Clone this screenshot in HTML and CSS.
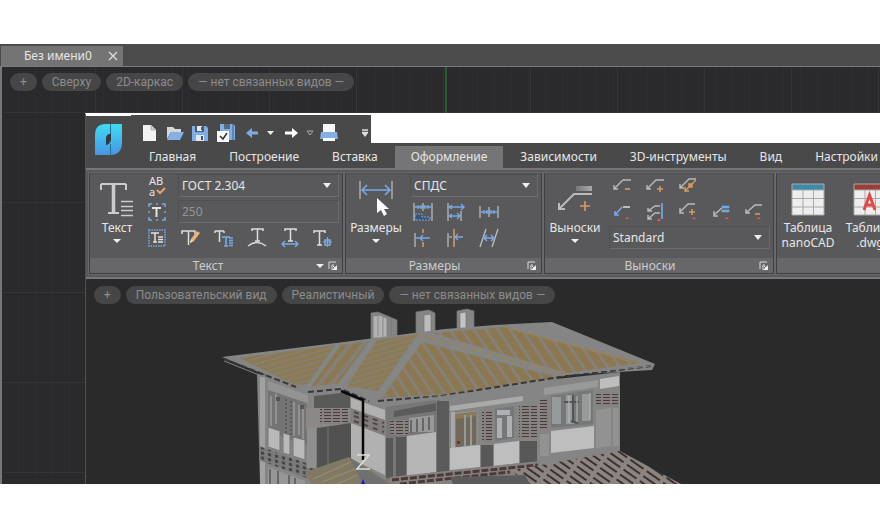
FILE: index.html
```html
<!DOCTYPE html>
<html lang="ru">
<head>
<meta charset="utf-8">
<title>Без имени0</title>
<link rel="stylesheet" href="styles.css">
</head>
<body>
<svg class="defs" aria-hidden="true">
  <defs>
    <linearGradient id="logo-fill" x1="0" y1="0" x2="0" y2="1"><stop offset="0" stop-color="#3fdcf2"/><stop offset="1" stop-color="#4796e6"/></linearGradient>
    <linearGradient id="bar-fill"><stop offset="0" stop-color="#777"/><stop offset="1" stop-color="#aaa"/></linearGradient>
    <pattern id="tiles-flat" width="20" height="5" patternUnits="userSpaceOnUse" patternTransform="rotate(-16)"><rect width="20" height="5" fill="#8a7a55"/><rect width="20" height="1" fill="#87827a"/></pattern>
    <pattern id="tiles-front" width="10" height="20" patternUnits="userSpaceOnUse" patternTransform="rotate(-34)"><rect width="10" height="20" fill="#85807a"/><rect width="7" height="20" fill="#8b7750"/></pattern>
    <pattern id="tiles-steep" width="10" height="20" patternUnits="userSpaceOnUse" patternTransform="rotate(38)"><rect width="10" height="20" fill="#858077"/><rect width="6" height="20" fill="#8b7750"/></pattern>
    <pattern id="slats" width="9" height="3" patternUnits="userSpaceOnUse"><rect width="9" height="3" fill="#858180"/><rect y="1" width="7" height="1" fill="#4b3b38"/></pattern>
    <pattern id="rail" width="7" height="5" patternUnits="userSpaceOnUse" patternTransform="skewY(13)"><rect width="7" height="5" fill="#7b7b7b"/><rect x="2" y="1" width="3" height="3" fill="#434040"/></pattern>
    <pattern id="porch" width="20" height="6" patternUnits="userSpaceOnUse" patternTransform="rotate(35)"><rect width="20" height="6" fill="#8b8582"/><rect width="16" height="2" y="2" fill="#3e302f"/></pattern>
  </defs>
  <symbol id="i-arrow" viewBox="0 0 8 6"><path d="M0 1h8L4 5z" fill="#eee"/></symbol>
  <symbol id="i-launch" viewBox="0 0 10 10"><path d="M1 8V1h7M4 9V4h2" fill="none" stroke="#ddd"/><path d="M5 5l3 3" stroke="#eee"/><path d="M9 4v5H4z" fill="#eee"/></symbol>
</svg>

<main class="app">
  <div class="doc-bar">
    <div class="doc-tab"><span>Без имени0</span><button class="close" aria-label="Закрыть"><svg viewBox="0 0 10 10"><path d="M1 1l8 8M9 1L1 9" stroke="#ddd" stroke-width="1.3"/></svg></button></div>
  </div>
  <div class="canvas">
    <div class="pills">
      <button class="pill">+</button><button class="pill">Сверху</button><button class="pill">2D-каркас</button><button class="pill">— нет связанных видов —</button>
    </div>
    <section class="window">
      <header class="head">
        <div class="logo"><svg viewBox="0 0 28 32"><path d="M0 31V11Q0 0 11 0h4v10q-4 0-4 5v6q4-1 5-6V0h11v18q0 13-12 13z" fill="url(#logo-fill)"/><path d="M15.500 0v10M15.500 20v11" stroke="#28708e"/><path d="M11 21v-6q0-4 4-5h1v6q-1 4-5 5z" fill="#333b42"/></svg></div>
        <div class="head-rows">
          <div class="quick-row">
            <div class="quick">
              <button aria-label="Создать"><svg viewBox="0 0 20 20"><path d="M4 2h8l5 5v11H4z" fill="#f2f2f2"/><path d="M12 2v5h5" fill="#ccc" stroke="#999" stroke-width=".6"/></svg></button>
              <button aria-label="Открыть"><svg viewBox="0 0 20 20"><path d="M2 4h6l2 2h6v3H6l-4 7z" fill="#d7d7d7"/><path d="M6 9h13l-4 8H2z" fill="#83b1e6"/></svg></button>
              <button aria-label="Сохранить"><svg viewBox="0 0 20 20"><path d="M2 3h14l2 2v13H2z" fill="#7eaee6"/><path d="M5 3h9v6H5z" fill="#4b5b6e"/><path d="M7 3h5v5H7zM6 12h8v6H6z" fill="#e5e9ee"/><path d="M11 13h2v4h-2zM11 4h1v3h-1z" fill="#456"/></svg></button>
              <button aria-label="Сохранить все"><svg viewBox="0 0 20 20"><path d="M4 1h13l2 2v14H4z" fill="#7eaee6"/><path d="M8 1h6v5H8z" fill="#596a7e"/><path d="M17 1v16" stroke="#4b5b6e"/><path d="M1 8h12v11H1z" fill="#fafafa"/><path d="M4 13l3 3 4-6" fill="none" stroke="#333" stroke-width="1.500"/></svg></button>
              <button aria-label="Отменить"><svg viewBox="0 0 20 20"><path d="M4 10l6-5v3.500h6v3h-6V15z" fill="#79abe5"/></svg></button>
              <button class="thin" aria-label="Список отмены"><svg viewBox="0 0 8 6"><path d="M0 1h7L3.500 5z" fill="#eee"/></svg></button>
              <button aria-label="Вернуть"><svg viewBox="0 0 20 20"><path d="M17 10l-6-5v3.500H4v3h7V15z" fill="#fff"/></svg></button>
              <button class="thin" aria-label="Список возврата"><svg viewBox="0 0 8 6"><path d="M1 1h6L4 5z" fill="none" stroke="#aaa"/></svg></button>
              <button class="print" aria-label="Печать"><svg viewBox="0 0 20 20"><path d="M4 1h12v8H4z" fill="#f7f7f7"/><path d="M2 9h16l1 7H1z" fill="#83b1e6"/><path d="M4 15h12v3H4z" fill="#fafafa"/></svg></button>
              <button class="thin" aria-label="Настроить панель"><svg viewBox="0 0 8 8"><path d="M1 1h6M1 3.500h6" stroke="#ddd" stroke-width="1.300"/><path d="M1 4h6L4 8z" fill="#ddd"/></svg></button>
            </div>
          </div>
          <nav class="tabs">
            <a href="#">Главная</a><a href="#">Построение</a><a href="#">Вставка</a><a href="#" class="active">Оформление</a><a href="#">Зависимости</a><a href="#">3D-инструменты</a><a href="#">Вид</a><a href="#">Настройки</a>
          </nav>
        </div>
      </header>

      <div class="ribbon">
        <section class="panel">
          <div class="body">
            <button class="big text"><svg class="pic" viewBox="0 0 36 36"><path d="M2 3h25M2 9V3M27 9V3M9 32h11" fill="none" stroke="#ccc" stroke-width="2"/><path d="M14.500 3v29" stroke="#ccc" stroke-width="3.500"/><path d="M22 20.500h12M22 25.500h12M22 29.500h12M22 34.500h12" stroke="#ccc" stroke-width="1.500"/></svg><span>Текст</span><svg class="arr"><use href="#i-arrow"/></svg></button>
            <div class="side">
              <button class="spell" aria-label="Орфография"><span>AB</span><span>a</span><svg class="tick" viewBox="0 0 10 8"><path d="M1 3l3 3 5-5" fill="none" stroke="#e6a267" stroke-width="2"/></svg></button>
              <button aria-label="Рамка текста"><svg viewBox="0 0 20 20"><path d="M2 5V2h3M15 2h3v3M18 15v3h-3M5 18H2v-3M2 9v2M18 9v2M9 2h2M9 18h2" fill="none" stroke="#78a7e2" stroke-width="1.500"/><path d="M5 6h9M9.500 6v9" stroke="#e2e2e2" stroke-width="2"/></svg></button>
              <button aria-label="Выделить текст"><svg viewBox="0 0 20 20"><path d="M2 2h16v16H2z" fill="none" stroke="#78a7e2" stroke-width="1.500" stroke-dasharray="1.500 1"/><path d="M4 5h8M8 5v9M6 14h4M11 9h5M11 11.500h5M11 14h5" stroke="#e2e2e2" stroke-width="1.500"/></svg></button>
            </div>
            <div class="col">
              <label class="field"><select aria-label="Стиль текста"><option>ГОСТ 2.304</option></select></label>
              <div class="field dim"><input aria-label="Высота текста" value="250"></div>
              <div class="icons">
                <button aria-label="Редактировать"><svg viewBox="0 0 20 20"><path d="M1 6V3h13v3M7.500 3v14" fill="none" stroke="#ddd" stroke-width="1.500"/><path d="M9 15l1-4 6-8 3 2-6 8z" fill="#e9b477"/><path d="M9 15l1-3 2 1z" fill="#eee"/></svg></button>
                <button aria-label="Масштаб текста"><svg viewBox="0 0 20 20"><path d="M1 3h9M5.500 3v11M1 3v2M10 3v2" stroke="#ddd" stroke-width="1.500"/><path d="M8 9h8M12 9v9M10 18h4M15 10h4M15 12.500h4M15 15h4M15 17.500h4" stroke="#78aae6" stroke-width="1.600"/></svg></button>
                <button aria-label="Текст по дуге"><svg viewBox="0 0 20 20"><path d="M5 3V1h11v2M10.500 1v12M8 13h5" fill="none" stroke="#ddd" stroke-width="1.500"/><path d="M1 18q9-7 18 0" fill="none" stroke="#ddd" stroke-width="1.300"/></svg></button>
                <button aria-label="Вписать текст"><svg viewBox="0 0 20 20"><path d="M5 3V1h11v2M10.500 1v12M8 13h5" fill="none" stroke="#ddd" stroke-width="1.500"/><path d="M2 16h16M5 13l-3 3 3 3M15 13l3 3-3 3" fill="none" stroke="#78aae6" stroke-width="1.400"/></svg></button>
                <button aria-label="Выравнивание"><svg viewBox="0 0 20 20"><path d="M1 5V3h11v2M6.500 3v14M4 17h5" fill="none" stroke="#ddd" stroke-width="1.500"/><path d="M14.500 9v10M10 14h9" stroke="#78aae6" stroke-width="1.200"/><path d="M12 12h5v5h-5z" fill="none" stroke="#78aae6" stroke-width="1.500"/></svg></button>
              </div>
            </div>
          </div>
          <div class="title menu"><span>Текст</span><svg class="arr"><use href="#i-arrow"/></svg><button aria-label="Параметры текста"><svg><use href="#i-launch"/></svg></button></div>
        </section>

        <section class="panel">
          <div class="body">
            <button class="big"><svg class="pic" viewBox="0 0 36 36"><path d="M2 0v18M34 0v18" stroke="#aaa" stroke-width="1.500"/><path d="M4 9h28M9 4L4 9l5 5M27 4l5 5-5 5" fill="none" stroke="#75a9e6" stroke-width="1.600"/><path d="M19 17v15l4-3 3 6 3-2-3-5h5z" fill="#fff"/></svg><span>Размеры</span><svg class="arr"><use href="#i-arrow"/></svg></button>
            <div class="col">
              <label class="field"><select aria-label="Стиль размеров"><option>СПДС</option></select></label>
              <div class="icons three">
                <button aria-label="Авторазмер"><svg viewBox="0 0 20 20"><path d="M1 1v18M19 1v18M10 1v8" stroke="#b9b9b9" stroke-width="1.300"/><path d="M2 5h16M5 3v4M15 3v4M8 3v4M12 3v4" stroke="#75a9e6" stroke-width="1.400"/><path d="M2 12h7v3h8v3H2z" fill="#3a5472" stroke="#75a9e6" stroke-dasharray="2 1"/></svg></button>
                <button aria-label="Базовый размер"><svg viewBox="0 0 20 20"><path d="M2 1v18M15 9v10" stroke="#b9b9b9" stroke-width="1.300"/><path d="M3 5h15M6 3L3 5l3 2M15 2l3 3-3 3M3 14h11M6 12l-3 2 3 2M11 11l3 3-3 3" fill="none" stroke="#75a9e6" stroke-width="1.400"/></svg></button>
                <button aria-label="Размерная цепь"><svg viewBox="0 0 20 20"><path d="M1 4v12M10 5v10M19 4v12" stroke="#b9b9b9" stroke-width="1.300"/><path d="M2 10h16M5 8v4M8 8v4M12 8v4M15 8v4" stroke="#75a9e6" stroke-width="1.300"/></svg></button>
                <button aria-label="Разрыв размера"><svg viewBox="0 0 20 20"><path d="M2 5v14" stroke="#b9b9b9" stroke-width="1.300"/><path d="M3 10h14M10 7l-3 3 3 3" fill="none" stroke="#75a9e6" stroke-width="1.400"/><path d="M10 1v4M10 14v5" stroke="#d99b60" stroke-width="1.500"/></svg></button>
                <button aria-label="Линия размера"><svg viewBox="0 0 20 20"><path d="M2 5v14" stroke="#b9b9b9" stroke-width="1.300"/><path d="M3 9h3M9 9h8M12 6L9 9l3 3" fill="none" stroke="#75a9e6" stroke-width="1.400"/><path d="M8 1v18" stroke="#d99b60" stroke-width="1.500"/></svg></button>
                <button aria-label="Наклонить размер"><svg viewBox="0 0 20 20"><path d="M7 1L1 19M19 1l-6 18" stroke="#b9b9b9" stroke-width="1.400"/><path d="M5 10h10M8 7l-3 3 3 3M12 7l3 3-3 3" fill="none" stroke="#75a9e6" stroke-width="1.500"/></svg></button>
              </div>
            </div>
          </div>
          <div class="title"><span>Размеры</span><button aria-label="Параметры размеров"><svg><use href="#i-launch"/></svg></button></div>
        </section>

        <section class="panel">
          <div class="body">
            <button class="big"><svg class="pic" viewBox="0 0 36 36"><path d="M19 5h16v5H19z" fill="url(#bar-fill)"/><path d="M35 13H17L2 28M2 22v6h6" fill="none" stroke="#bbb" stroke-width="2"/><path d="M28 20v10M23 25h10" stroke="#d99b60" stroke-width="1.600"/></svg><span>Выноски</span><svg class="arr"><use href="#i-arrow"/></svg></button>
            <div class="col">
              <div class="icons">
                <button aria-label="Убрать линию"><svg viewBox="0 0 20 20"><path d="M19 4h-8l-9 9M2 9v4h4" fill="none" stroke="#b9b9b9" stroke-width="1.400"/><path d="M13 13h5" stroke="#d99b60" stroke-width="1.600"/></svg></button>
                <button aria-label="Добавить линию"><svg viewBox="0 0 20 20"><path d="M19 4h-8l-9 9M2 9v4h4" fill="none" stroke="#b9b9b9" stroke-width="1.400"/><path d="M12 13h6M15 10v6" stroke="#d99b60" stroke-width="1.500"/></svg></button>
                <button aria-label="Изменить линию"><svg viewBox="0 0 20 20"><path d="M18 3h-7l-9 9M2 8v4h4" fill="none" stroke="#b9b9b9" stroke-width="1.400"/><path d="M18 4L7 15M7 11v4h4M11 8h3v3h-3z" fill="none" stroke="#d99b60" stroke-width="1.400"/></svg></button>
              </div>
              <div class="icons">
                <button aria-label="Стиль выноски"><svg viewBox="0 0 20 20"><path d="M11 5h7" stroke="#bbb" stroke-width="2"/><path d="M10 5l-7 8M3 9v4h4" fill="none" stroke="#75a9e6" stroke-width="1.500"/><path d="M13 17l2-2 2 2z" fill="#e05a59"/></svg></button>
                <button aria-label="Выровнять выноски"><svg viewBox="0 0 20 20"><path d="M17 1v16" stroke="#75a9e6" stroke-width="1.700"/><path d="M15 4h-5l-7 5M3 6v3h4M15 11h-5l-7 6M3 13v4h4" fill="none" stroke="#bbb" stroke-width="1.400"/><path d="M12 19l2-3 2 3z" fill="#e05a59"/></svg></button>
                <button aria-label="Добавить выноску"><svg viewBox="0 0 20 20"><path d="M17 2h-7l-8 8M2 6v5h4" fill="none" stroke="#bbb" stroke-width="1.400"/><path d="M11 10h6M14 7v6" stroke="#d99b60" stroke-width="1.500"/><path d="M14 17l2-2 2 2z" fill="#e05a59"/></svg></button>
                <button aria-label="Собрать выноски"><svg viewBox="0 0 20 20"><path d="M11 6L3 13M3 9v5h4" fill="none" stroke="#bbb" stroke-width="1.400"/><path d="M11 4h7v2h-7zM11 8h7v2h-7z" fill="#75a9e6" stroke="#75a9e6" stroke-width=".6"/><path d="M14 17l2-2 2 2z" fill="#e05a59"/></svg></button>
                <button aria-label="Удалить выноску"><svg viewBox="0 0 20 20"><path d="M18 3h-7l-9 8M2 7v4h4" fill="none" stroke="#bbb" stroke-width="1.400"/><path d="M11 12h5" stroke="#d99b60" stroke-width="1.500"/><path d="M13 17l2-2 2 2z" fill="#e05a59"/></svg></button>
              </div>
              <label class="field"><select aria-label="Стиль выносок"><option>Standard</option></select></label>
            </div>
          </div>
          <div class="title"><span>Выноски</span><button aria-label="Параметры выносок"><svg><use href="#i-launch"/></svg></button></div>
        </section>

        <section class="panel last">
          <div class="body">
            <button class="big wide"><svg class="pic" viewBox="0 0 36 36"><path d="M2 3h32v31H2z" fill="#eee"/><path d="M2 3h32v6H2z" fill="#3d8ba8"/><path d="M2 9h32M2 17.500h32M2 26h32M13 9v25M23.500 9v25M2 3h32v31H2z" fill="none" stroke="#a8a8a8"/></svg><span>Таблица nanoCAD</span></button>
            <button class="big wide"><svg class="pic" viewBox="0 0 36 36"><path d="M2 3h32v31H2z" fill="#eee"/><path d="M2 3h32v6H2z" fill="#9b3d38"/><path d="M2 9h32M2 17.500h32M2 26h32M13 9v25M23.500 9v25M2 3h32v31H2z" fill="none" stroke="#a8a8a8"/><path d="M12 29l5.500-15L23 29M14 24h7" fill="none" stroke="#e34848" stroke-width="3"/></svg><span>Таблица .dwg</span></button>
          </div>
          <div class="title"></div>
        </section>
      </div>

      <div class="view">
        <svg class="model" viewBox="86 279 794 205" role="img" aria-label="Модель дома">
          <g stroke="#777" stroke-width=".7">
            <path d="M371 313l7-1 19 8v20h-26z" fill="#858585"/><path d="M373 316l6-1 8 3v20h-14z" fill="#b2b2b2"/><path d="M378 314v22M383 316v22M391 318v20"/>
            <path d="M416 312l13-2 6 3v24h-19z" fill="#858585"/><path d="M424 315l7-1v20h-7z" fill="#bcbcbc"/>
            <path d="M457 311l10-2 7 2v20h-17z" fill="#858585"/><path d="M460 313l6-1v17h-6z" fill="#c4c4c4"/>
          </g>
          <path d="M257 374l100 14 190-8 73-8v86l60 26H260z" fill="#858585"/>
          <path d="M260 377h5v107h-5z" fill="#a1a1a1"/>
          <path d="M268 381l40 14v10l-40-14z" fill="#939393"/>
          <path d="M268 390l39 13v42l-39-13z" fill="#747474"/>
          <g stroke="#9b9b9b" stroke-width="1.500"><path d="M271 396v30M276 394v30M294 402v34M299 405v30M303 406v33"/></g>
          <path d="M286 399v35M291 401v34" stroke="#454545" stroke-dasharray="2 2"/>
          <path d="M276 397h4v4h-4zM300 405h4v4h-4z" fill="#555"/>
          <path d="M268 427l12 4v20l-12-4zM283 433l7 2v20l-7-2zM293 437l12 3v20l-12-4z" fill="#b9b9b9" stroke="#777"/>
          <path d="M259 446l58 21v15l-58-22z" fill="url(#rail)"/>
          <path d="M268 467l37 14v3h-37z" fill="#969696"/><path d="M270 469v15M278 471v13M289 475v9M295 478v6" stroke="#666" stroke-width="2"/>
          <path d="M314 396l36-4v20l-36 1z" fill="#595959"/>
          <path d="M306 408h44v16l-44 5z" fill="#8c8888"/>
          <path d="M320 409h28v15h-28z" fill="url(#slats)"/>
          <path d="M317 428l34-5v37l-34 8z" fill="#515151"/><path d="M328 427v38M316 430v37" stroke="#777"/>
          <path d="M307 428h9v40h-9z" fill="#8f8f8f"/>
          <path d="M351 398l34 12v65l-34-16z" fill="#b1b1b1"/>
          <path d="M351 408l34 12v16l-34-13z" fill="#807d7b"/><path d="M354 412l30 11M354 416l30 11M354 421l30 11" stroke="#4e4746" stroke-width="2" stroke-dasharray="5 5"/>
          <path d="M386 407l54-8v77l-54 5z" fill="#777"/><path d="M394 411l42-8v8l-42 6z" fill="#5b5b5b"/>
          <path d="M390 420h18v15h-18z" fill="url(#slats)"/><path d="M409 418l25-3v17h-25z" fill="#999"/><path d="M411 420v13M417 419v13M423 418v13M429 417v13" stroke="#666" stroke-width="2"/>
          <path d="M386 438h7v40h-7zM396 437h10v40h-10z" fill="#585858"/><path d="M407 436l29-4v40l-29 4z" fill="#b6b6b6"/>
          <path d="M437 401h12v73h-12z" fill="#5b5b5b"/>
          <path d="M450 404l88-10v70l-88 10z" fill="#858585"/><path d="M450 406l73-10v5l-73 10z" fill="#aaa"/>
          <path d="M451 412h4v50h-4z" fill="#a8a8a8"/>
          <path d="M455 414l22-3v34l-22 3z" fill="#71695c" stroke="#999"/><path d="M456 417l20-3" stroke="#8a7a58" stroke-width="4"/><path d="M465 415v31M471 415v31" stroke="#999" stroke-width="2"/>
          <path d="M457 441h3v3h-3z" fill="#812e24"/>
          <path d="M482 411h10v31h-10z" fill="url(#slats)"/><path d="M495 409l19-3v32l-19 3z" fill="#777"/><path d="M497 410h13v5h-13zM497 418h5v20h-5zM507 416h5v21h-5z" fill="#adb1b5"/>
          <path d="M519 406h18v33h-18z" fill="url(#slats)"/>
          <path d="M450 448l30-3v22l-30 3zM494 444l25-3v22l-25 3z" fill="#bebebe"/><path d="M481 445h12v22h-12zM520 441h17v22h-17z" fill="#585858"/>
          <path d="M539 385l81-12v78l-81 12z" fill="#858585"/><path d="M544 388l54-8v7l-54 8z" fill="#999"/>
          <path d="M540 398h9v31h-9z" fill="url(#slats)"/><path d="M551 396l42-6v34l-42 4z" fill="#777"/><path d="M552 397h9v27h-9zM566 395h8v29h-8zM582 394h8v27h-8z" fill="#969a9b"/><path d="M573 395v28M564 402h15M571 421l7 2" stroke="#505456" stroke-width="2"/><path d="M569 396v27M577 396v26M590 393v27" stroke="#bbb"/>
          <path d="M600 379l19-3v10l-19 3z" fill="#bebebe"/><path d="M596 392h22v14h-22z" fill="url(#slats)"/>
          <path d="M551 431l43-5v22l-43 5z" fill="#bebebe"/><path d="M540 434h9v22h-9zM596 410l15-2v38l-15 2zM613 408h6v38h-6z" fill="#929292"/>
          <path d="M390 477l150-16v11l-90 12h-62z" fill="#858180"/><path d="M392 480l146-15M400 484l110-12" stroke="#4b3936" stroke-width="3" stroke-dasharray="7 2"/>
          <path d="M513 470l107-19 61 33H522z" fill="url(#porch)"/>
          <path d="M305 472l44-15 20 12 22 15h-80z" fill="#817965"/><path d="M313 479l38-17M322 482l38-15M337 484l30-13" stroke="#a09065"/><path d="M349 457l16 12 25 15h-27z" fill="#6f7171"/>
          <path d="M450 477l75-2 5 9h-77z" fill="#5b5b5b"/>
          <path d="M222 357l114-14 109-14 50-4 57-3 103 42-3 6-85 5-20 7-101 18-78 2-27-15-34 5z" fill="#858585"/>
          <path d="M239 358l97-13-28 39-13 1z" fill="url(#tiles-flat)"/>
          <path d="M341 345l28-4-31 43-27 2z" fill="url(#tiles-steep)"/>
          <path d="M377 340l41-6-40 57-31-5z" fill="url(#tiles-flat)"/>
          <path d="M422 342l136 35-114 17-62 4z" fill="url(#tiles-front)"/>
          <path d="M432 333l72-6 136 36-73 10z" fill="url(#tiles-front)"/>
          <path d="M420 335l148 40M508 328l132 36" stroke="#a18447" stroke-width="1"/>
          <path d="M422 338l-44 60M374 340l-36 49M338 345l-32 45" stroke="#858785" stroke-width="4"/>
          <path d="M224 359l72 28M308 392l33-3 28 12M378 401l62-5 120-19 91-11" fill="none" stroke="#3b3735" stroke-width="2" stroke-dasharray="6 3"/><path d="M224 361l80 32M378 404l165-20M568 374l83-8" fill="none" stroke="#858585" stroke-width="1"/>
          <path d="M341 391l22 9v60" fill="none" stroke="#080808" stroke-width="2.500"/>
          <path d="M357 455h12l-12 14h13" fill="none" stroke="#ddd" stroke-width="1.600"/><path d="M361 484l2-5 2 5z" fill="#1616dc"/>
        </svg>
        <div class="pills">
          <button class="pill">+</button><button class="pill">Пользовательский вид</button><button class="pill">Реалистичный</button><button class="pill">— нет связанных видов —</button>
        </div>
      </div>
    </section>
  </div>
</main>
</body>
</html>
```
FILE: styles.css
```css
* { box-sizing: border-box; }
body {
  margin: 0;
  min-height: 100vh;
  padding: 44px 0;
  display: flex;
  flex-direction: column;
  background: #fff;
  color: #e6e6e6;
  font: 12px/16px "Noto Sans", sans-serif;
}
button {
  margin: 0;
  padding: 0;
  border: 0;
  background: none;
  color: inherit;
  font: inherit;
}
svg { display: block; }
.defs { position: absolute; width: 0; height: 0; }

.app { flex: 1; display: flex; flex-direction: column; overflow: hidden; background: #4b4b4b; }
.doc-bar { display: flex; height: 23px; padding: 2px 0 0 1px; border-bottom: 1px solid #7b7b7b; }
.doc-tab { display: flex; align-items: center; gap: 16px; padding: 0 5px 0 23px; background: #747474; }
.close { width: 10px; height: 10px; }

.canvas {
  flex: 1;
  display: flex;
  flex-direction: column;
  border-left: 2px solid #777;
  background-color: #2a2a2c;
  background-image:
    linear-gradient(#285f32, #285f32),
    repeating-linear-gradient(90deg, transparent 0 82px, #343537 82px 83px, transparent 83px 87px),
    repeating-linear-gradient(transparent 0 45px, #333438 45px 46px, transparent 46px 90px),
    repeating-linear-gradient(90deg, transparent 0 16px, #2d2e30 16px 17px);
  background-size: 2px 46px, auto, auto, auto;
  background-position: 443px 0, 11px 0, 0 0, 0 10px;
  background-repeat: no-repeat, repeat, repeat, repeat;
}
.pills { display: flex; gap: 5px; padding: 6px 8px; }
.pill {
  height: 18px;
  padding: 0 10px;
  border-radius: 9px;
  background: #464647;
  color: #8c8c8c;
  font: 12px/18px Roboto, sans-serif;
  white-space: nowrap;
}

.window {
  flex: 1;
  display: flex;
  flex-direction: column;
  min-width: 0;
  margin: 16px 0 0 83px;
  border-top: 2px solid #fff;
  border-left: 1px solid #505052;
  background: #2a2a2b;
}
.head { display: flex; background: #49494a; }
.logo { width: 45px; border-top: 1px solid #fff; padding: 8px 8px 0 9px; }
.logo svg { width: 28px; height: 32px; }
.head-rows { flex: 1; min-width: 0; }
.quick-row { background: #fff; }
.quick { display: flex; align-items: center; width: 240px; height: 28px; padding: 8px 0 0 5px; background: #49494a; }
.quick svg { width: 20px; height: 20px; }
.quick button { display: flex; justify-content: center; width: 26px; }
.quick .thin { width: 13px; }
.quick .thin svg { width: 8px; height: 8px; }
.quick .print { margin-right: 16px; }
.tabs { display: flex; gap: 1px; height: 25px; padding: 3px 0 0 2px; overflow: hidden; }
.tabs a { flex: none; padding: 3px 16px; color: inherit; text-decoration: none; }
.tabs .active { background: #757576; }

.ribbon {
  display: flex;
  gap: 2px;
  padding: 3px 0 3px 3px;
  border: solid #777778;
  border-width: 2px 0;
  background: #59595b;
  overflow: hidden;
}
.panel {
  flex: none;
  display: flex;
  flex-direction: column;
  border: 1px solid #404042;
  border-top-color: #505052;
  background: #59595b;
  box-shadow: 0 0 0 1px #68686a;
}
.panel.last { flex: 1 0 126px; }
.body { display: flex; height: 84px; }
.title { display: flex; align-items: center; height: 15px; background: #676769; color: #ccc; }
.title span { flex: 1; text-align: center; }
.title.menu { padding-left: 10px; }
.title button { width: 18px; padding: 0 4px; }
.title button svg { width: 10px; height: 10px; }
.arr { width: 8px; height: 6px; }

.big { display: flex; flex-direction: column; align-items: center; width: 60px; padding-top: 7px; }
.big.text { width: 54px; }
.big.wide { width: 62px; }
.pic { flex: none; width: 36px; height: 36px; margin-bottom: 3px; }
.big .arr { margin-top: 3px; }
.big span { line-height: 15px; }
.side { display: flex; flex-direction: column; gap: 3px; width: 26px; }
.side button { display: flex; align-items: center; justify-content: center; height: 23px; position: relative; }
.side svg { width: 20px; height: 20px; }
.side .spell { flex-direction: column; align-items: flex-start; padding-left: 5px; font-size: 11px; line-height: 11px; }
.side .tick { position: absolute; right: 4px; bottom: 2px; width: 10px; height: 8px; }
.col { display: flex; flex-direction: column; gap: 3px; width: 168px; padding-right: 3px; }
.side + .col { margin-left: 4px; }
.icons { display: grid; grid-template-columns: repeat(5, 33px); row-gap: 3px; }
.icons.three { grid-template-columns: repeat(3, 33px); }
.icons button { display: flex; align-items: center; justify-content: center; height: 23px; }
.icons svg { width: 20px; height: 20px; }
.field { position: relative; display: block; height: 23px; margin-left: 4px; border: 1px solid #6b6b6d; border-left-color: #505052; border-top-color: #505052; }
.field select, .field input {
  display: block;
  width: 100%;
  height: 21px;
  margin: 0;
  padding: 0 3px;
  border: 0;
  appearance: none;
  background: transparent;
  color: #e6e6e6;
  font: inherit;
}
.field.dim input { color: #959595; }
label.field::after {
  content: "";
  position: absolute;
  top: 8px;
  right: 7px;
  width: 8px;
  height: 5px;
  background: #eee;
  clip-path: polygon(0 0, 100% 0, 50% 100%);
}
.panel:nth-child(2) .col { width: 135px; }

.view { flex: 1; display: grid; overflow: hidden; }
.view > * { grid-area: 1 / 1; }
.view .pills { align-self: start; padding-top: 7px; }
.model { width: 794px; height: 205px; }
```
